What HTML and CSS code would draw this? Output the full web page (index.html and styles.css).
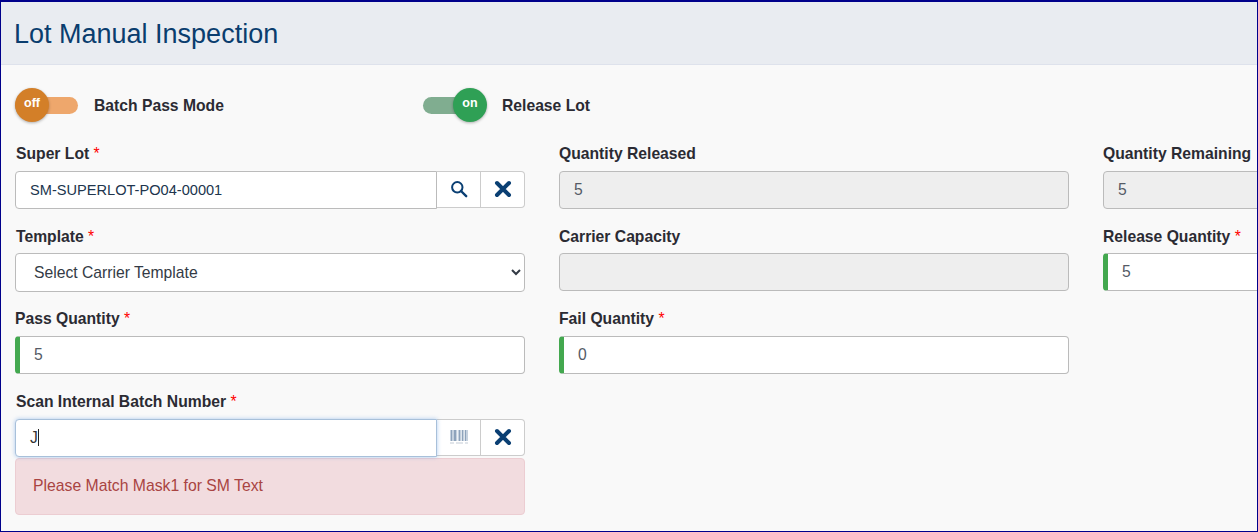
FILE: index.html
```html
<!DOCTYPE html>
<html lang="en">
<head>
  <meta charset="UTF-8" />
  <title>Lot Manual Inspection</title>
  <link rel="stylesheet" href="styles.css">
</head>
<body>
  <div class="frame">
    <header class="page-header">
      <h1>Lot Manual Inspection</h1>
    </header>

    <div class="toggles">
      <div class="toggle-item batch">
        <div class="toggle off"><span class="knob">off</span></div>
        <span class="toggle-label">Batch Pass Mode</span>
      </div>
      <div class="toggle-item">
        <div class="toggle on"><span class="knob">on</span></div>
        <span class="toggle-label">Release Lot</span>
      </div>
    </div>

    <div class="form-grid">
      <div class="field">
        <label class="inset">Super Lot <span class="req">*</span></label>
        <div class="input-group">
          <input class="control lot-input" type="text" value="SM-SUPERLOT-PO04-00001" />
          <button class="group-btn" aria-label="Search">
            <svg width="18" height="18" viewBox="0 0 18 18"><circle cx="7.3" cy="7.3" r="5.2" fill="none" stroke="#0a3f73" stroke-width="2"/><path d="M11 11l5.2 5.2" stroke="#0a3f73" stroke-width="2.4" stroke-linecap="round"/></svg>
          </button>
          <button class="group-btn last" aria-label="Clear">
            <svg width="18" height="18" viewBox="0 0 18 18"><path d="M3 3l12 12M15 3L3 15" stroke="#0a3f73" stroke-width="4" stroke-linecap="round"/></svg>
          </button>
        </div>
      </div>
      <div class="field">
        <label>Quantity Released</label>
        <input class="control" type="text" value="5" disabled />
      </div>
      <div class="field">
        <label>Quantity Remaining</label>
        <input class="control" type="text" value="5" disabled />
      </div>

      <div class="field">
        <label class="inset">Template <span class="req">*</span></label>
        <select class="control select">
          <option>Select Carrier Template</option>
        </select>
      </div>
      <div class="field">
        <label>Carrier Capacity</label>
        <input class="control" type="text" value="" disabled />
      </div>
      <div class="field">
        <label>Release Quantity <span class="req">*</span></label>
        <input class="control valid" type="text" value="5" />
      </div>

      <div class="field">
        <label>Pass Quantity <span class="req">*</span></label>
        <input class="control valid" type="text" value="5" />
      </div>
      <div class="field">
        <label>Fail Quantity <span class="req">*</span></label>
        <input class="control valid" type="text" value="0" />
      </div>
      <div class="field"></div>

      <div class="field">
        <label class="inset">Scan Internal Batch Number <span class="req">*</span></label>
        <div class="input-group">
          <div class="control focused">J<span class="caret"></span></div>
          <button class="group-btn" aria-label="Scan">
            <svg width="18" height="14" viewBox="0 0 18 14"><path d="M0 0h18v11H0z" fill="#c5d1de"/><path d="M1 0h1v11H1zM4 0h2v11H4zM9 0h1v11H9zM12 0h1v11h-1zM15 0h1v11h-1z" fill="#8ea3bb"/><path d="M7 0h1v11H7zM11 0h.6v11H11zM14 0h.6v11H14z" fill="#eef2f6"/><path d="M0 12.5h4v1H0zM6 12.5h7v1H6zM15 12.5h3v1h-3z" fill="#c3ccd6"/></svg>
          </button>
          <button class="group-btn last" aria-label="Clear">
            <svg width="18" height="18" viewBox="0 0 18 18"><path d="M3 3l12 12M15 3L3 15" stroke="#0a3f73" stroke-width="4" stroke-linecap="round"/></svg>
          </button>
        </div>
        <div class="alert">Please Match Mask1 for SM Text</div>
      </div>
    </div>
  </div>
</body>
</html>
```

FILE: styles.css
```css
html, body {
  margin: 0;
  height: 100%;
  overflow: hidden;
}
body {
  font-family: "Liberation Sans", Arial, sans-serif;
  background-color: #f9f9f9;
  color: #212529;
}
.frame {
  box-sizing: border-box;
  height: 532px;
  width: 1258px;
  overflow: hidden;
  border: 1px solid #00008b;
  border-top-width: 2px;
  background-color: #f9f9f9;
}
.page-header {
  box-sizing: border-box;
  height: 63px;
  padding: 16px 13px 0;
  background-color: #e9ecf1;
  border-bottom: 1px solid #dee2ec;
}
h1 {
  margin: 0;
  font-size: 27px;
  line-height: 32px;
  font-weight: 400;
  color: #0a3d6e;
}
.toggles {
  box-sizing: border-box;
  display: flex;
  height: 58px;
  padding: 22px 0 0 14px;
  align-items: center;
}
.toggle-item {
  display: flex;
  align-items: center;
}
.toggle-item.batch {
  width: 408px;
}
.toggle {
  position: relative;
  width: 63px;
  height: 17px;
  border-radius: 9px;
}
.toggle.off {
  background-color: #eea76c;
}
.toggle.on {
  background-color: #80ad90;
}
.knob {
  position: absolute;
  top: -9px;
  width: 34px;
  height: 34px;
  border-radius: 50%;
  color: #fff;
  font-size: 12.5px;
  font-weight: bold;
  line-height: 30px;
  text-align: center;
  box-shadow: 0 1px 3px rgba(0, 0, 0, 0.3);
}
.off .knob {
  left: 0;
  background-color: #d37f28;
}
.on .knob {
  left: 30px;
  background-color: #2fa055;
}
.toggle-label {
  margin-left: 16px;
  padding-top: 2px;
  font-size: 15.7px;
  font-weight: bold;
  color: #2b2b33;
}
.form-grid {
  display: grid;
  grid-template-columns: repeat(3, 510px);
  column-gap: 34px;
  padding-left: 14px;
  grid-auto-rows: 82.7px;
  padding-top: 19.7px;
}
.field label {
  display: block;
  height: 20px;
  margin: 1.4px 0 6.6px;
  font-size: 15.7px;
  line-height: 20px;
  font-weight: bold;
  color: #2b2b33;
}
.field label.inset {
  margin-left: 1px;
}
.req {
  color: #f00;
  font-weight: normal;
}
.control {
  box-sizing: border-box;
  display: block;
  width: 100%;
  height: 38px;
  padding: 0 14px;
  border: 1px solid #bbb;
  border-radius: 4px;
  background-color: #fff;
  font-family: inherit;
  font-size: 15.7px;
  color: #555b66;
}
.control:disabled {
  background-color: #eee;
  opacity: 1;
}
.control.valid {
  padding-left: 14px;
  border-left: 5px solid #43a84f;
}
.select {
  height: 39px;
  padding-left: 14px;
  color: #333a45;
}
.input-group {
  display: flex;
  width: 510px;
}
.input-group .control {
  flex: 0 0 422px;
  width: 422px;
  border-radius: 4px 0 0 4px;
}
.lot-input.control {
  font-size: 14.6px;
  color: #20354d;
}
.focused {
  display: flex;
  align-items: center;
  border-color: #a8c0da;
  box-shadow: 0 0 4px rgba(120, 170, 230, 0.6);
  color: #333;
  position: relative;
}
.caret {
  width: 1px;
  height: 17px;
  background-color: #222;
}
.group-btn {
  box-sizing: border-box;
  flex: 0 0 44px;
  height: 37px;
  padding: 0;
  border: 1px solid #ccc;
  border-left: 0;
  background-color: #fff;
  display: flex;
  align-items: center;
  justify-content: center;
}
.group-btn.last {
  border-radius: 0 4px 4px 0;
}
.alert {
  box-sizing: border-box;
  width: 510px;
  height: 57px;
  margin-top: 1px;
  padding: 0 17px;
  border: 1px solid #eccdd2;
  border-radius: 4px;
  background-color: #f2dcdf;
  color: #a94442;
  font-size: 15.75px;
  line-height: 54px;
}
```
